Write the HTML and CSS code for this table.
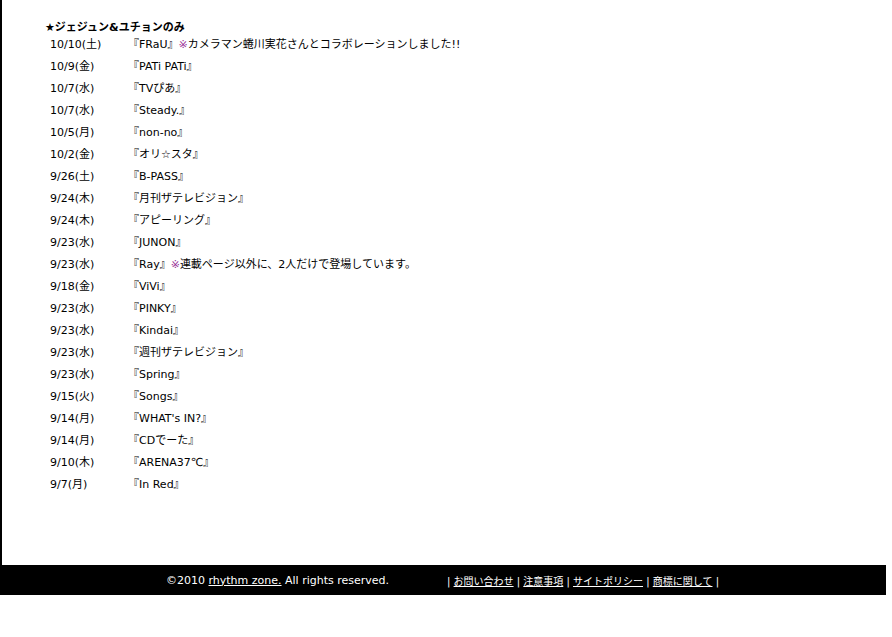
FILE: index.html
```html
<!DOCTYPE html>
<html lang="ja">
<head>
<meta charset="utf-8">
<title>rhythm zone</title>
<link rel="stylesheet" href="styles.css">
</head>
<body>
<div class="page">
  <div class="content">
    <h2 class="heading">★ジェジュン&amp;ユチョンのみ</h2>
    <table class="list">
      <tr><td class="date">10/10(土)</td><td class="title">『FRaU』<span class="mark">※</span>カメラマン蜷川実花さんとコラボレーションしました!!</td></tr>
      <tr><td class="date">10/9(金)</td><td class="title">『PATi PATi』</td></tr>
      <tr><td class="date">10/7(水)</td><td class="title">『TVぴあ』</td></tr>
      <tr><td class="date">10/7(水)</td><td class="title">『Steady.』</td></tr>
      <tr><td class="date">10/5(月)</td><td class="title">『non-no』</td></tr>
      <tr><td class="date">10/2(金)</td><td class="title">『オリ☆スタ』</td></tr>
      <tr><td class="date">9/26(土)</td><td class="title">『B-PASS』</td></tr>
      <tr><td class="date">9/24(木)</td><td class="title">『月刊ザテレビジョン』</td></tr>
      <tr><td class="date">9/24(木)</td><td class="title">『アピーリング』</td></tr>
      <tr><td class="date">9/23(水)</td><td class="title">『JUNON』</td></tr>
      <tr><td class="date">9/23(水)</td><td class="title">『Ray』<span class="mark">※</span>連載ページ以外に、2人だけで登場しています。</td></tr>
      <tr><td class="date">9/18(金)</td><td class="title">『ViVi』</td></tr>
      <tr><td class="date">9/23(水)</td><td class="title">『PINKY』</td></tr>
      <tr><td class="date">9/23(水)</td><td class="title">『Kindai』</td></tr>
      <tr><td class="date">9/23(水)</td><td class="title">『週刊ザテレビジョン』</td></tr>
      <tr><td class="date">9/23(水)</td><td class="title">『Spring』</td></tr>
      <tr><td class="date">9/15(火)</td><td class="title">『Songs』</td></tr>
      <tr><td class="date">9/14(月)</td><td class="title">『WHAT's IN?』</td></tr>
      <tr><td class="date">9/14(月)</td><td class="title">『CDでーた』</td></tr>
      <tr><td class="date">9/10(木)</td><td class="title">『ARENA37℃』</td></tr>
      <tr><td class="date">9/7(月)</td><td class="title">『In Red』</td></tr>
    </table>
  </div>
  <div class="footer">
    <div class="copy">©2010 <a href="#">rhythm zone.</a> All rights reserved.</div>
    <div class="links">| <a href="#">お問い合わせ</a> | <a href="#">注意事項</a> | <a href="#">サイトポリシー</a> | <a href="#">商標に関して</a> |</div>
  </div>
</div>
</body>
</html>
```

FILE: styles.css
```css
html, body {
  margin: 0;
  padding: 0;
  background: #ffffff;
}
body {
  font-family: "DejaVu Sans", "Noto Sans CJK JP", sans-serif;
  font-size: 11px;
  color: #000000;
}
.page {
  width: 886px;
}
.content {
  border-left: 2px solid #000000;
  height: 543px;
  padding-top: 22px;
}
.heading {
  margin: 0 0 0 43px;
  font-size: 11px;
  line-height: 12px;
  font-weight: bold;
}
.list {
  border-collapse: collapse;
  margin-left: 48px;
}
.list td {
  padding: 0;
  height: 22px;
  line-height: 22px;
  vertical-align: middle;
  white-space: nowrap;
}
.date {
  width: 78px;
}
.mark {
  color: #993399;
}
.footer {
  background: #000000;
  height: 30px;
  display: flex;
  align-items: center;
  padding-left: 166px;
  color: #ffffff;
  font-size: 11px;
}
.footer a {
  color: #ffffff;
  text-decoration: underline;
}
.copy {
  width: 281px;
}
.links {
  font-size: 10px;
}
```
